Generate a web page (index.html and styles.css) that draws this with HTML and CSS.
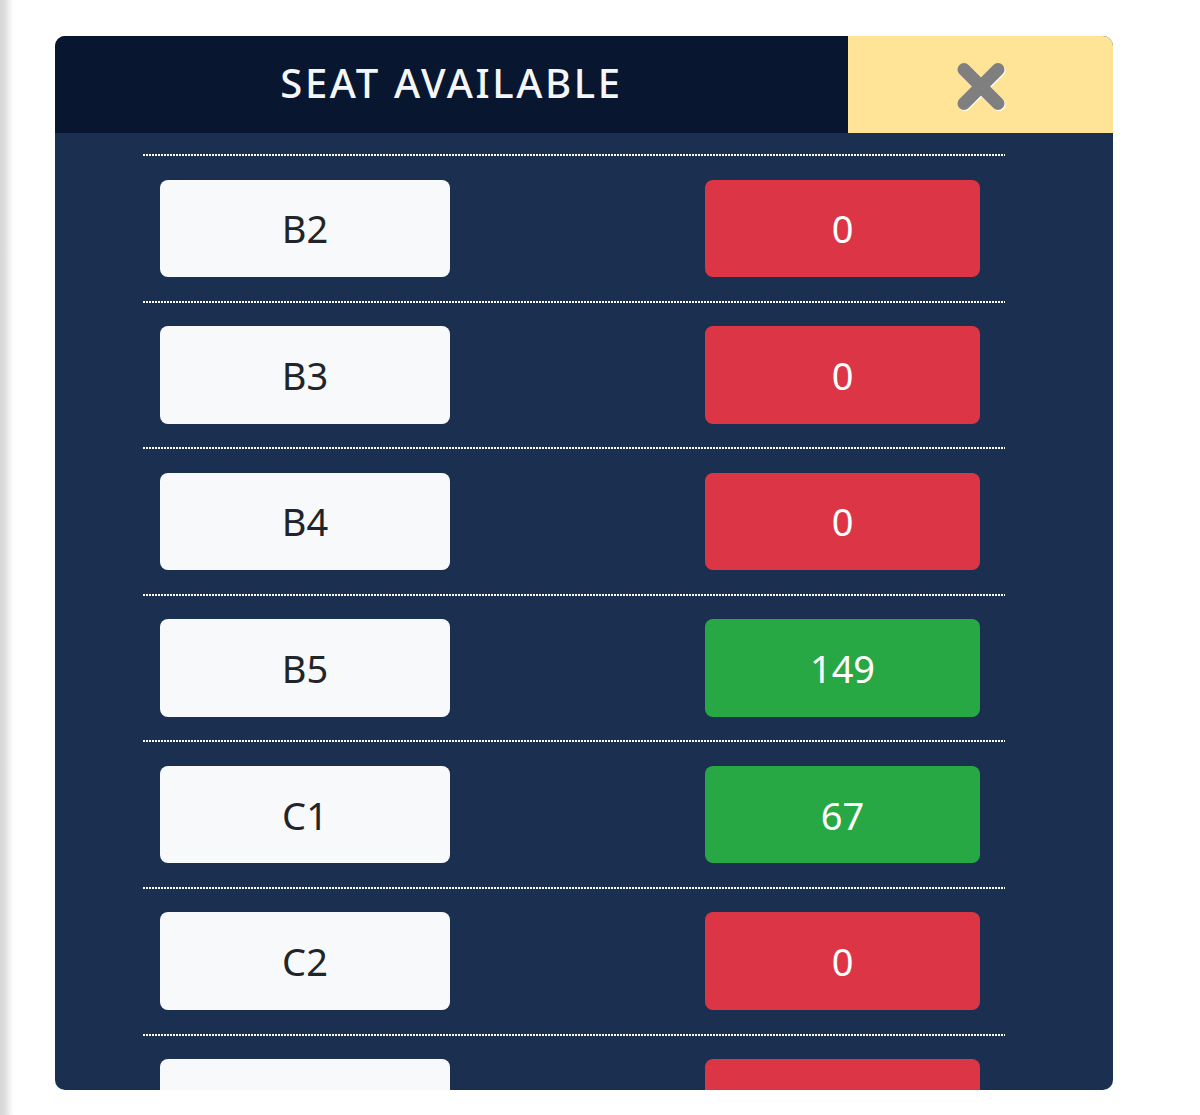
FILE: index.html
```html
<!DOCTYPE html>
<html>
<head>
<meta charset="utf-8">
<link rel="stylesheet" href="styles.css">
</head>
<body>
<div class="panel">
  <div class="header">
    <div class="title">SEAT AVAILABLE</div>
    <div class="close">
      <svg class="x-icon" width="48" height="49" viewBox="0 0 48 49">
        <line x1="7" y1="7.5" x2="41" y2="41.5" />
        <line x1="41" y1="7.5" x2="7" y2="41.5" />
      </svg>
    </div>
  </div>
  <div class="list">
    <div class="row"><div class="zone">B2</div><div class="count red">0</div></div>
    <div class="row"><div class="zone">B3</div><div class="count red">0</div></div>
    <div class="row"><div class="zone">B4</div><div class="count red">0</div></div>
    <div class="row"><div class="zone">B5</div><div class="count green">149</div></div>
    <div class="row"><div class="zone">C1</div><div class="count green">67</div></div>
    <div class="row"><div class="zone">C2</div><div class="count red">0</div></div>
    <div class="row"><div class="zone"></div><div class="count red"></div></div>
  </div>
</div>
</body>
</html>
```

FILE: styles.css
```css
html, body {
  margin: 0;
  height: 100%;
}
body {
  background: linear-gradient(to right, #d6d6d6 0, #dedede 5px, #f3f3f3 10px, #ffffff 14px);
  padding: 36px 87px 0 55px;
  box-sizing: border-box;
  font-family: "Noto Sans", "Open Sans", sans-serif;
  overflow: hidden;
}
.panel {
  width: 1058px;
  height: 1054px;
  border-radius: 10px;
  overflow: hidden;
  background: #1b3050;
  display: flex;
  flex-direction: column;
}
.header {
  display: flex;
  height: 97px;
  flex-shrink: 0;
}
.title {
  flex: 1;
  background: #08172f;
  color: #f4f6fa;
  display: flex;
  align-items: center;
  justify-content: center;
  font-size: 40px;
  font-weight: 500;
  letter-spacing: 2.6px;
  padding-bottom: 4px;
}
.close {
  width: 265px;
  background: #ffe397;
  display: flex;
  align-items: center;
  justify-content: center;
}
.x-icon {
  margin-top: 3px;
  filter: drop-shadow(1px 1px 0 #ffffff);
}
.x-icon line {
  stroke: #7f7f7f;
  stroke-width: 13;
  stroke-linecap: round;
}
.list {
  padding: 21px 108px 0 88px;
}
.row {
  display: flex;
  justify-content: space-between;
  padding: 25.5px 25px 23.5px 17px;
  background-image: repeating-linear-gradient(to right, #ffffff 0, #ffffff 2px, transparent 2px, transparent 3px);
  background-size: 100% 2px;
  background-repeat: no-repeat;
  background-position: top left;
}
.zone, .count {
  height: 97.6px;
  border-radius: 8px;
  display: flex;
  align-items: center;
  justify-content: center;
  font-size: 38px;
}
.zone {
  width: 290px;
  background: #f8f9fa;
  color: #212529;
}
.count {
  width: 275px;
  color: #ffffff;
}
.red {
  background: #dc3545;
}
.green {
  background: #28a745;
}
```
